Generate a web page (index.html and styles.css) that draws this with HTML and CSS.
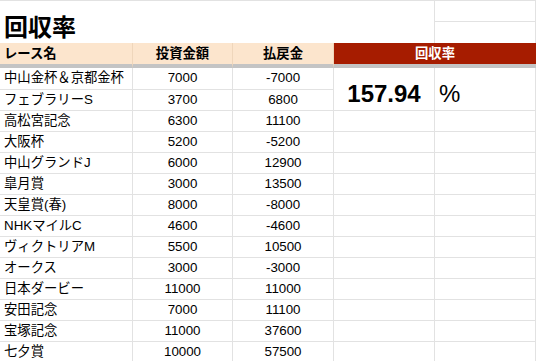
FILE: index.html
```html
<!DOCTYPE html>
<html lang="ja">
<head>
<meta charset="utf-8">
<title>回収率</title>
<link rel="stylesheet" href="styles.css">
</head>
<body>
<div class="sheet">
  <div class="cell title">回収率</div>
  <div class="cell blank r1"></div>
  <div class="cell blank r2"></div>

  <div class="cell head left">レース名</div>
  <div class="cell head">投資金額</div>
  <div class="cell head">払戻金</div>
  <div class="cell head red">回収率</div>

  <div class="cell name first">中山金杯＆京都金杯</div>
  <div class="cell num first">7000</div>
  <div class="cell num first">-7000</div>
  <div class="cell result">157.94</div>
  <div class="cell pct">%</div>

  <div class="cell name">フェブラリーS</div><div class="cell num">3700</div><div class="cell num">6800</div>
  <div class="cell name">高松宮記念</div><div class="cell num">6300</div><div class="cell num">11100</div><div class="cell"></div><div class="cell"></div>
  <div class="cell name">大阪杯</div><div class="cell num">5200</div><div class="cell num">-5200</div><div class="cell"></div><div class="cell"></div>
  <div class="cell name">中山グランドJ</div><div class="cell num">6000</div><div class="cell num">12900</div><div class="cell"></div><div class="cell"></div>
  <div class="cell name">皐月賞</div><div class="cell num">3000</div><div class="cell num">13500</div><div class="cell"></div><div class="cell"></div>
  <div class="cell name">天皇賞(春)</div><div class="cell num">8000</div><div class="cell num">-8000</div><div class="cell"></div><div class="cell"></div>
  <div class="cell name">NHKマイルC</div><div class="cell num">4600</div><div class="cell num">-4600</div><div class="cell"></div><div class="cell"></div>
  <div class="cell name">ヴィクトリアM</div><div class="cell num">5500</div><div class="cell num">10500</div><div class="cell"></div><div class="cell"></div>
  <div class="cell name">オークス</div><div class="cell num">3000</div><div class="cell num">-3000</div><div class="cell"></div><div class="cell"></div>
  <div class="cell name">日本ダービー</div><div class="cell num">11000</div><div class="cell num">11000</div><div class="cell"></div><div class="cell"></div>
  <div class="cell name">安田記念</div><div class="cell num">7000</div><div class="cell num">11100</div><div class="cell"></div><div class="cell"></div>
  <div class="cell name">宝塚記念</div><div class="cell num">11000</div><div class="cell num">37600</div><div class="cell"></div><div class="cell"></div>
  <div class="cell name">七夕賞</div><div class="cell num">10000</div><div class="cell num">57500</div><div class="cell"></div><div class="cell"></div>
</div>
</body>
</html>
```
FILE: styles.css
```css
html, body {
  margin: 0;
  padding: 0;
  background: #ffffff;
}

body {
  font-family: "Liberation Sans", Arial, "Noto Sans CJK JP", sans-serif;
  font-size: 13.33px;
  color: #000000;
  overflow: hidden;
}

.sheet {
  display: grid;
  grid-template-columns: 133px 100px 101px 101px 1fr;
  grid-template-rows: 21px 21px 25px 22px repeat(13, 21px);
  border-top: 1px solid #e2e2e2;
  width: 536px;
}

.cell {
  box-sizing: border-box;
  border-right: 1px solid #e2e2e2;
  border-bottom: 1px solid #e2e2e2;
  display: flex;
  align-items: flex-end;
  justify-content: center;
  padding: 0 4px 3px;
  line-height: 15px;
  white-space: nowrap;
  overflow: hidden;
}

.title {
  grid-column: 1 / 5;
  grid-row: 1 / 3;
  justify-content: flex-start;
  font-size: 24px;
  font-weight: bold;
  line-height: 26px;
  padding-bottom: 2px;
  border-bottom: none;
}

.r1 { grid-column: 5; grid-row: 1; }
.r2 { grid-column: 5; grid-row: 2; border-bottom: none; }

.head {
  background: #fce5cd;
  font-weight: bold;
  border-right: 1px solid #efd6bb;
  border-bottom: 4px solid #c4c4c4;
  padding-bottom: 3px;
}

.head.left { justify-content: flex-start; }

.head.red {
  grid-column: 4 / 6;
  background: #a61c00;
  color: #ffffff;
  border-right: none;
}

.name { justify-content: flex-start; }

.first { padding-bottom: 4px; }

.result {
  grid-column: 4;
  grid-row: 4 / 6;
  font-size: 24px;
  font-weight: bold;
  line-height: 26px;
  padding-bottom: 3px;
}

.pct {
  grid-column: 5;
  grid-row: 4 / 6;
  justify-content: flex-start;
  font-size: 24px;
  line-height: 26px;
  padding-bottom: 3px;
}
```
